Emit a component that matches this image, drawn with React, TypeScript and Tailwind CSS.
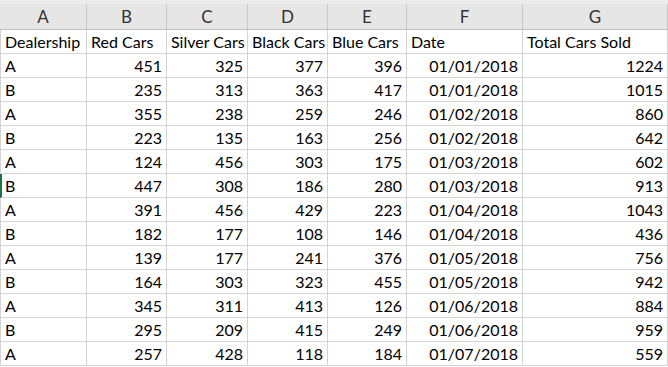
const cols = [
  { letter: 'A', w: 'w-[87px]', title: 'Dealership', align: 'left' },
  { letter: 'B', w: 'w-[80px]', title: 'Red Cars', align: 'right' },
  { letter: 'C', w: 'w-[81px]', title: 'Silver Cars', align: 'right' },
  { letter: 'D', w: 'w-[80px]', title: 'Black Cars', align: 'right' },
  { letter: 'E', w: 'w-[79px]', title: 'Blue Cars', align: 'right' },
  { letter: 'F', w: 'w-[116px]', title: 'Date', align: 'right' },
  { letter: 'G', w: 'flex-1', title: 'Total Cars Sold', align: 'right' },
];

const rows = [
  ['A', '451', '325', '377', '396', '01/01/2018', '1224'],
  ['B', '235', '313', '363', '417', '01/01/2018', '1015'],
  ['A', '355', '238', '259', '246', '01/02/2018', '860'],
  ['B', '223', '135', '163', '256', '01/02/2018', '642'],
  ['A', '124', '456', '303', '175', '01/03/2018', '602'],
  ['B', '447', '308', '186', '280', '01/03/2018', '913'],
  ['A', '391', '456', '429', '223', '01/04/2018', '1043'],
  ['B', '182', '177', '108', '146', '01/04/2018', '436'],
  ['A', '139', '177', '241', '376', '01/05/2018', '756'],
  ['B', '164', '303', '323', '455', '01/05/2018', '942'],
  ['A', '345', '311', '413', '126', '01/06/2018', '884'],
  ['B', '295', '209', '415', '249', '01/06/2018', '959'],
  ['A', '257', '428', '118', '184', '01/07/2018', '559'],
];

function Cell({ i, text, right, first, selected }: { i: number; text: string; right: boolean; first?: boolean; selected?: boolean }) {
  const col = cols[i];
  return (
    <div
      className={`${col.w} h-[24px] shrink-0 border-b border-r border-[#d4d4d4] flex items-end pb-[1px] ${
        right ? 'justify-end pr-[4px]' : selected ? 'justify-start pl-[3px]' : 'justify-start pl-[4px]'
      } ${first ? (selected ? 'border-l-2 border-l-[#217346]' : 'border-l border-l-[#d4d4d4]') : ''}`}
    >
      <span className="leading-[20px] whitespace-nowrap">{text}</span>
    </div>
  );
}

export default function App() {
  return (
    <div className="w-[668px] h-[367px] overflow-hidden bg-white text-[16px] text-black font-['Lato','Open_Sans',sans-serif]">
      <div className="h-[30px] bg-[#e6e6e6] flex flex-col">
        <div className="h-[5px] bg-[#ececec]" />
        <div className="flex flex-1 border-b border-[#bdbdbd]">
          {cols.map((c) => (
            <div
              key={c.letter}
              className={`${c.w} shrink-0 border-r border-[#c8c8c8] flex items-center justify-center text-[#333] text-[17px]`}
            >
              {c.letter}
            </div>
          ))}
        </div>
      </div>
      <div className="flex">
        {cols.map((c, i) => (
          <Cell key={c.letter} i={i} text={c.title} right={false} first={i === 0} />
        ))}
      </div>
      {rows.map((r, ri) => (
        <div key={ri} className="flex">
          {r.map((v, i) => (
            <Cell key={i} i={i} text={v} right={i > 0} first={i === 0} selected={ri === 5} />
          ))}
        </div>
      ))}
    </div>
  );
}
